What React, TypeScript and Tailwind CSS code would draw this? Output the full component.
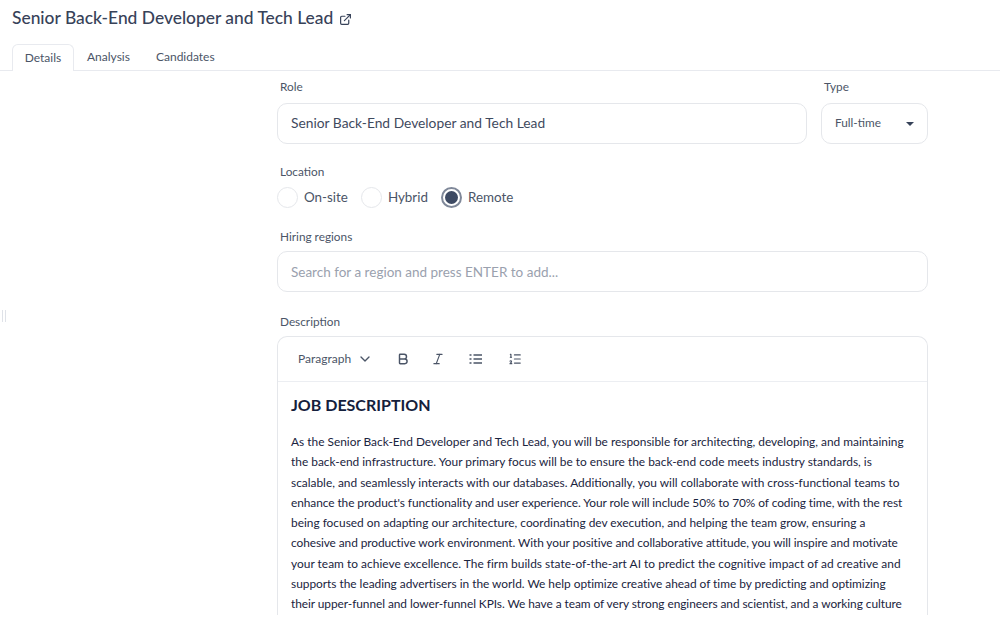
import { ExternalLink, ChevronDown, Bold, Italic, ListOrdered } from "lucide-react";

const font = { fontFamily: '"Lato", "Noto Sans", sans-serif' };

function Radio({ label, checked }: { label: string; checked?: boolean }) {
  return (
    <div className="flex items-center gap-[6px]">
      <span className={`flex h-[21px] w-[21px] items-center justify-center rounded-full border ${checked ? "border-2 border-[#7f8899]" : "border-[#e5e7eb]"}`}>
        {checked && <span className="h-[13px] w-[13px] rounded-full bg-[#3d4a63]" />}
      </span>
      <span className="text-[13.4px] text-[#4b5567]">{label}</span>
    </div>
  );
}

const body = [
  { t: "As the Senior Back-End Developer and Tech Lead, you will be responsible for architecting, developing, and maintaining", c: "" },
  { t: "the back-end infrastructure. Your primary focus will be to ensure the back-end code meets industry standards, is", c: "" },
  { t: "scalable, and seamlessly interacts with our databases. Additionally, you will collaborate with cross-functional teams to", c: "" },
  { t: "enhance the product's functionality and user experience. Your role will include 50% to 70% of coding time, with the rest", c: "tracking-[-0.075px]" },
  { t: "being focused on adapting our architecture, coordinating dev execution, and helping the team grow, ensuring a", c: "" },
  { t: "cohesive and productive work environment. With your positive and collaborative attitude, you will inspire and motivate", c: "tracking-[-0.085px]" },
  { t: "your team to achieve excellence. The firm builds state-of-the-art AI to predict the cognitive impact of ad creative and", c: "tracking-[0.03px]" },
  { t: "supports the leading advertisers in the world. We help optimize creative ahead of time by predicting and optimizing", c: "tracking-[-0.02px]" },
  { t: "their upper-funnel and lower-funnel KPIs. We have a team of very strong engineers and scientist, and a working culture", c: "tracking-[-0.06px]" },
];

export default function App() {
  return (
    <div className="relative h-[619px] w-[1000px] overflow-hidden bg-white" style={font}>
      <div className="flex h-[36px] items-center gap-[6px] pl-3">
        <h1 className="text-[17.4px] font-medium text-[#374259]">Senior Back-End Developer and Tech Lead</h1>
        <ExternalLink className="mt-[2px] h-[13px] w-[13px] text-[#374259]" strokeWidth={2.2} />
      </div>
      <div className="mt-2 flex h-[27px] border-b border-[#e8eaef] pl-3 text-[12px] text-[#4b5567]">
        <div className="-mb-px flex h-[27px] w-[62px] items-center justify-center rounded-t-md border border-b-0 border-[#e8eaef] bg-white pb-px">Details</div>
        <div className="ml-[13px] flex items-center">Analysis</div>
        <div className="ml-[26px] flex items-center">Candidates</div>
      </div>
      <div className="absolute left-0 top-[310px] flex h-3 gap-[2px] pl-[2px]">
        <span className="w-px bg-[#dfe2e8]" />
        <span className="w-px bg-[#dfe2e8]" />
      </div>
      <div className="ml-[277px] w-[651px] text-[#4b5567]">
        <div className="mt-[8px] flex gap-[14px]">
          <div className="flex w-[530px] flex-col">
            <label className="ml-[3px] text-[11.8px] leading-[16px]">Role</label>
            <div className="mt-[8px] flex h-[41px] items-center rounded-[10px] border border-[#e5e7eb] px-[13px] text-[13.8px] text-[#3f4a5e]">Senior Back-End Developer and Tech Lead</div>
          </div>
          <div className="flex flex-1 flex-col">
            <label className="ml-[3px] text-[11.8px] leading-[16px]">Type</label>
            <div className="mt-[8px] flex h-[41px] items-center justify-between rounded-[10px] border border-[#e5e7eb] pl-[13px] pr-[13px] text-[11.8px]">
              <span className="-mt-[2px]">Full-time</span>
              <span className="h-0 w-0 border-x-[4px] border-t-[4px] border-x-transparent border-t-[#374259]" />
            </div>
          </div>
        </div>
        <label className="ml-[3px] mt-[20px] block text-[11.8px] leading-[16px]">Location</label>
        <div className="mt-[7px] flex items-center gap-[13px]">
          <Radio label="On-site" />
          <Radio label="Hybrid" />
          <Radio label="Remote" checked />
        </div>
        <label className="ml-[3px] mt-[21px] block text-[11.8px] leading-[16px]">Hiring regions</label>
        <div className="mt-[6px] flex h-[41px] items-center rounded-[10px] border border-[#e5e7eb] px-[13px] pt-px text-[13.5px] text-[#9aa1ae]">Search for a region and press ENTER to add...</div>
        <label className="ml-[3px] mt-[22px] block text-[11.8px] leading-[16px]">Description</label>
        <div className="mt-[6px] rounded-t-[10px] border border-b-0 border-[#e5e7eb]">
          <div className="flex h-[45px] items-center border-b border-[#eceef2] pl-5 text-[#4b5567]">
            <span className="text-[12px]">Paragraph</span>
            <ChevronDown className="ml-[6px] h-[16px] w-[16px]" />
            <Bold className="ml-[23px] h-[14px] w-[14px]" strokeWidth={2.5} />
            <Italic className="ml-[21px] h-[14px] w-[14px]" />
            <svg className="ml-[24px] h-[14px] w-[14px]" viewBox="0 0 14 14" stroke="currentColor" strokeWidth="1.5" fill="none">
              <path d="M0.5 3H2.5M0.5 7H2.5M0.5 11H2.5" />
              <path d="M4.5 3H13M4.5 7H13M4.5 11H13" />
            </svg>
            <ListOrdered className="ml-[25px] h-[14px] w-[14px]" />
          </div>
          <div className="px-[13px] text-[#1a2440]">
            <h2 className="mt-[11px] text-[16px] font-bold leading-[24px] text-[#14203c]">JOB DESCRIPTION</h2>
            <div className="mt-[15px] text-[11.9px] leading-[20.3px]">
              {body.map((l) => (
                <div key={l.t} className={`whitespace-nowrap ${l.c}`}>{l.t}</div>
              ))}
            </div>
          </div>
        </div>
      </div>
    </div>
  );
}
